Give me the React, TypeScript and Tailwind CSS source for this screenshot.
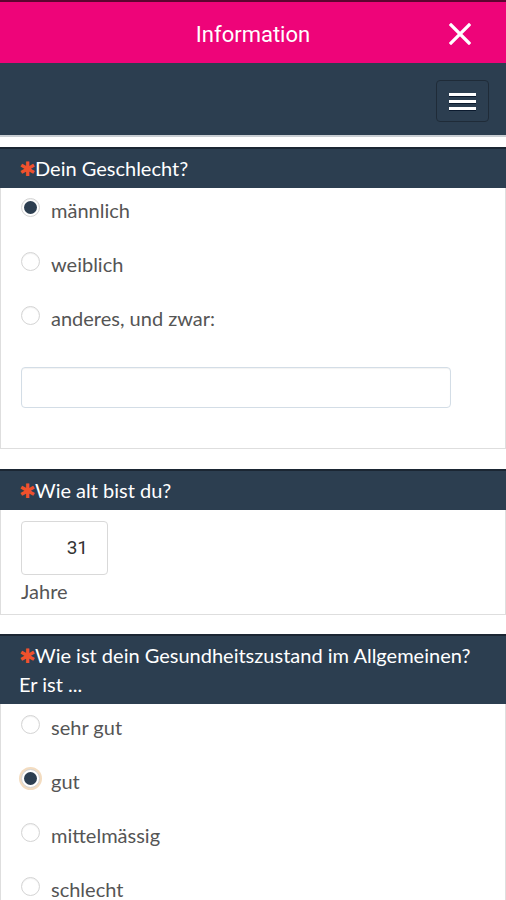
import React from "react";

function Radio({ checked, focus }: { checked?: boolean; focus?: boolean }) {
  return (
    <span
      className={
        "flex h-[19px] w-[19px] shrink-0 items-center justify-center rounded-full border border-[#d4d4d4] bg-white " +
        (focus ? "shadow-[0_0_0_2px_#f3dcc0]" : "shadow-[inset_0_1px_1px_rgba(0,0,0,0.06)]")
      }
    >
      {checked && <span className="h-[13px] w-[13px] rounded-full bg-[#2c3e50]" />}
    </span>
  );
}

function Row({ label, checked, focus }: { label: string; checked?: boolean; focus?: boolean }) {
  return (
    <div className="flex h-[40px] items-center">
      <div className="-mt-[6px]">
        <Radio checked={checked} focus={focus} />
      </div>
      <span className="ml-[11px] text-[20px] text-[#555]">{label}</span>
    </div>
  );
}

function Header({ children }: { children: React.ReactNode }) {
  return (
    <div className="border-t-2 border-[#1b2633] bg-[#2c3e50] py-[5px] pl-[19px] pr-[20px] text-[20px] leading-[29px] text-white">
      <span className="mr-[-1px] text-[#f0512c]">✱</span>
      {children}
    </div>
  );
}

export default function App() {
  return (
    <div className="w-[506px] h-[900px] overflow-hidden bg-white" style={{ fontFamily: "Lato, 'Noto Sans', sans-serif" }}>
      <div className="relative flex h-[63px] items-center justify-center border-t-2 border-[#5c0530] bg-[#ee0479] pt-[3px]">
        <span className="text-[22px] text-white" style={{ fontFamily: "Roboto, sans-serif" }}>
          Information
        </span>
        <svg className="absolute right-[35px] top-[21px]" width="22" height="22" viewBox="0 0 22 22">
          <path d="M2 2 L20 20 M20 2 L2 20" stroke="white" strokeWidth="3.2" strokeLinecap="square" />
        </svg>
      </div>
      <div className="flex h-[74px] items-center justify-end border-b-2 border-[#c9ced3] bg-[#2c3e50] pr-[17px] pt-[4px]">
        <div className="flex h-[42px] w-[53px] flex-col items-center justify-center gap-[4px] rounded-[4px] border border-[#1f2b38]">
          <span className="h-[3px] w-[27px] bg-white shadow-[0_1px_0_#0b1a2e]" />
          <span className="h-[3px] w-[27px] bg-white shadow-[0_1px_0_#0b1a2e]" />
          <span className="h-[3px] w-[27px] bg-white shadow-[0_1px_0_#0b1a2e]" />
        </div>
      </div>

      <div className="pt-[10px]">
        <div>
          <Header>Dein Geschlecht?</Header>
          <div className="border-x border-b border-[#dedede] pb-[40px] pl-[20px] pt-[2px]">
            <div className="flex flex-col gap-[14px]">
              <Row label="männlich" checked />
              <Row label="weiblich" />
              <Row label="anderes, und zwar:" />
            </div>
            <div className="mt-[29px] h-[41px] w-[430px] rounded-[4px] border border-[#d3dde6] bg-white shadow-[inset_0_1px_1px_rgba(0,0,0,0.05)]" />
          </div>
        </div>

        <div className="mt-[20px]">
          <Header>Wie alt bist du?</Header>
          <div className="border-x border-b border-[#dedede] pb-[8px] pl-[20px] pt-[11px]">
            <div
              className="flex h-[54px] w-[87px] items-center justify-end rounded-[4px] border border-[#d9d9d9] pr-[19px] text-[19px] text-[#333]"
              style={{ fontFamily: "Roboto, sans-serif" }}
            >
              31
            </div>
            <div className="mt-[1px] text-[20px] leading-[30px] text-[#555]">Jahre</div>
          </div>
        </div>

        <div className="mt-[19px]">
          <Header>
            Wie ist dein Gesundheitszustand im Allgemeinen?
            <br />
            Er ist ...
          </Header>
          <div className="border-x border-b border-[#dedede] pl-[20px] pt-[3px] pb-[20px]">
            <div className="flex flex-col gap-[14px]">
              <Row label="sehr gut" />
              <Row label="gut" checked focus />
              <Row label="mittelmässig" />
              <Row label="schlecht" />
            </div>
          </div>
        </div>
      </div>
    </div>
  );
}
